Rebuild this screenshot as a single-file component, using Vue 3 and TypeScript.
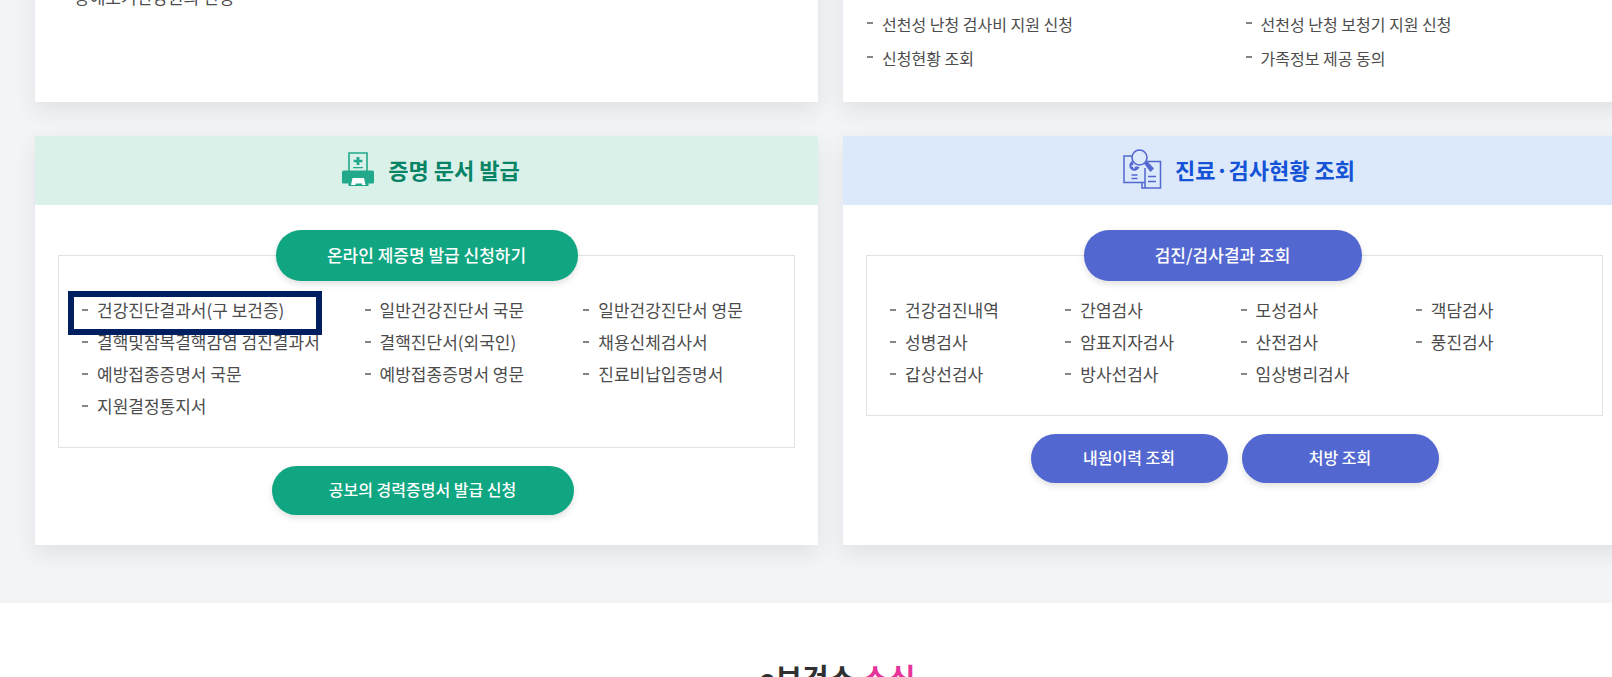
<script setup lang="ts">
interface ListItem {
  label: string
  marked?: boolean
}

const supportLinks: string[] = [
  '선천성 난청 검사비 지원 신청',
  '선천성 난청 보청기 지원 신청',
  '신청현황 조회',
  '가족정보 제공 동의',
]

const certificates: ListItem[] = [
  { label: '건강진단결과서(구 보건증)', marked: true },
  { label: '일반건강진단서 국문' },
  { label: '일반건강진단서 영문' },
  { label: '결핵및잠복결핵감염 검진결과서' },
  { label: '결핵진단서(외국인)' },
  { label: '채용신체검사서' },
  { label: '예방접종증명서 국문' },
  { label: '예방접종증명서 영문' },
  { label: '진료비납입증명서' },
  { label: '지원결정통지서' },
]

const examinations: ListItem[] = [
  { label: '건강검진내역' },
  { label: '간염검사' },
  { label: '모성검사' },
  { label: '객담검사' },
  { label: '성병검사' },
  { label: '암표지자검사' },
  { label: '산전검사' },
  { label: '풍진검사' },
  { label: '갑상선검사' },
  { label: '방사선검사' },
  { label: '임상병리검사' },
]
</script>

<template>
  <div class="page">
    <main class="services">
      <section class="card card-top">
        <ul class="plain-list">
          <li><a href="#">장애보기건강권의 신청</a></li>
        </ul>
      </section>

      <section class="card card-top">
        <ul class="support-list">
          <li v-for="label in supportLinks" :key="label"><a href="#">{{ label }}</a></li>
        </ul>
      </section>

      <section class="card green">
        <h2 class="card-title">
          <svg width="34" height="36" viewBox="0 0 34 36" aria-hidden="true">
            <path d="M8 20V2h18v18" fill="none" stroke="#22a88a" stroke-width="1.6" />
            <path d="M15.6 6h2.8v2.7h3v2.6h-3V14h-2.8v-2.7h-3V8.7h3zM12 16h10v1.200H12z" fill="#22a88a" />
            <path d="M2.500 19.500h29q1.500 0 1.500 1.500v10.500q0 1-1 1h-4.500V35H7.500v-2.500H2q-1 0-1-1V21q0-1.500 1.500-1.500z" fill="#22a88a" />
            <path d="M11.500 27h11.500l1.600 7H21v-1.500h-6.500V34H10z" fill="#fff" />
          </svg>
          <span>증명 문서 발급</span>
        </h2>
        <div class="card-body">
          <div class="panel">
            <button type="button" class="pill pill-main">온라인 제증명 발급 신청하기</button>
            <ul class="items certificate-items">
              <li v-for="item in certificates" :key="item.label" :class="{ marked: item.marked }">
                <a href="#">{{ item.label }}</a>
              </li>
            </ul>
          </div>
          <div class="actions">
            <button type="button" class="pill pill-wide">공보의 경력증명서 발급 신청</button>
          </div>
        </div>
      </section>

      <section class="card blue">
        <h2 class="card-title">
          <svg width="40" height="42" viewBox="0 0 40 42" aria-hidden="true">
            <g fill="none" stroke="#5267cf" stroke-width="1.5">
              <path d="M10 8H2v26.500h18M23 20v14.500M25 13.500h13.500v26.500H20V34.500h3V40" />
              <path d="M9.500 27h6M9.500 30.500h6M26 28.500h8M26 33.500h8" />
            </g>
            <path d="M10 13a5.200 5.200 0 1 0 7.500 6A9 9 0 0 1 10 13z" fill="#5267cf" />
            <path d="M12 15.500v5M9.500 18h5" stroke="#dce9fa" stroke-width="1.500" />
            <path d="m22 15.500 3-2.500 7 7.500-3.500 3.500z" fill="#5267cf" />
            <circle cx="17.500" cy="9.500" r="7.500" fill="#dce9fa" stroke="#5267cf" stroke-width="1.600" />
          </svg>
          <span>진료·검사현황 조회</span>
        </h2>
        <div class="card-body">
          <div class="panel">
            <button type="button" class="pill pill-main">검진/검사결과 조회</button>
            <ul class="items exam-items">
              <li v-for="item in examinations" :key="item.label"><a href="#">{{ item.label }}</a></li>
            </ul>
          </div>
          <div class="actions">
            <button type="button" class="pill">내원이력 조회</button>
            <button type="button" class="pill">처방 조회</button>
          </div>
        </div>
      </section>
    </main>

    <section class="news">
      <h2>e보건소 <em>소식</em></h2>
    </section>
  </div>
</template>

<style>
body {
  margin: 0;
  overflow: hidden;
}
</style>

<style scoped>
.page {
  height: 100vh;
  overflow: hidden;
  background: #fff;
  color: #4c4c4c;
  font-family: 'Noto Sans CJK KR', 'Noto Sans', sans-serif;
}

.services {
  display: grid;
  grid-template-columns: 1fr 1fr;
  gap: 34px 25px;
  margin-top: -26px;
  padding: 0 0 58px 35px;
  margin-right: -14px;
  background: #f3f4f6;
}

ul {
  margin: 0;
  padding: 0;
  list-style: none;
}

a {
  color: inherit;
  text-decoration: none;
}

.card {
  background: #fff;
  box-shadow: 0 8px 20px rgba(30, 40, 50, 0.09);
}

.card-top {
  padding: 6px 24px 27px;
  font-size: 16px;
  line-height: 34px;
}

.plain-list {
  padding-left: 15px;
  font-size: 17px;
}

.support-list {
  display: grid;
  grid-template-columns: 1fr 1fr;
  margin-right: -22px;
  padding-top: 27px;
}

.support-list li,
.items li {
  position: relative;
  padding-left: 15px;
}

.support-list li::before,
.items li::before {
  content: '';
  position: absolute;
  top: 15px;
  left: 0;
  width: 6px;
  height: 2px;
  background: #858585;
}

.card-title {
  display: flex;
  align-items: center;
  justify-content: center;
  gap: 13px;
  box-sizing: border-box;
  height: 69px;
  margin: 0;
  padding: 0 0 4px 8px;
  font-size: 22px;
  font-weight: 700;
}

.green .card-title {
  background: #daf1ea;
  color: #078466;
}

.blue .card-title {
  background: #dce9fa;
  color: #1553d6;
}

.card-body {
  padding: 25px 23px 30px;
}

.panel {
  display: flex;
  flex-direction: column;
  align-items: center;
  margin-top: 25px;
  padding: 0 23px 25px;
  border: 1px solid #e3e3e3;
}

.pill {
  box-sizing: border-box;
  width: 197px;
  height: 49px;
  border: 0;
  border-radius: 25px;
  padding: 0 0 3px;
  background: #5267cf;
  box-shadow: 0 3px 6px rgba(0, 0, 0, 0.12);
  color: #fff;
  font: 500 16px 'Noto Sans CJK KR', 'Noto Sans', sans-serif;
}

.green .pill {
  background: #10a682;
}

.pill-main {
  width: 278px;
  height: 51px;
  margin-top: -26px;
  font-size: 17px;
}

.blue .pill-main {
  margin-right: 24px;
}

.green .pill-wide,
.green .pill-main {
  width: 302px;
}

.green .actions {
  padding-right: 8px;
}

.items {
  display: grid;
  align-self: stretch;
  margin-top: 13px;
  font-size: 17px;
  line-height: 32px;
}

.certificate-items {
  grid-template-columns: 283fr 219fr 188fr;
}

.exam-items {
  grid-template-columns: repeat(4, 1fr);
  margin-right: -12px;
}

.marked::after {
  content: '';
  position: absolute;
  z-index: 1;
  top: -3px;
  left: -14px;
  box-sizing: border-box;
  width: 254px;
  height: 44px;
  border: 6px solid #001f61;
}

.actions {
  display: flex;
  justify-content: center;
  gap: 14px;
  margin-top: 18px;
}

.news {
  padding: 53px 0 0 62px;
  text-align: center;
}

.news h2 {
  margin: 0;
  color: #303030;
  font-size: 29px;
  font-weight: 700;
}

.news em {
  color: #e6349a;
  font-style: normal;
}
</style>
